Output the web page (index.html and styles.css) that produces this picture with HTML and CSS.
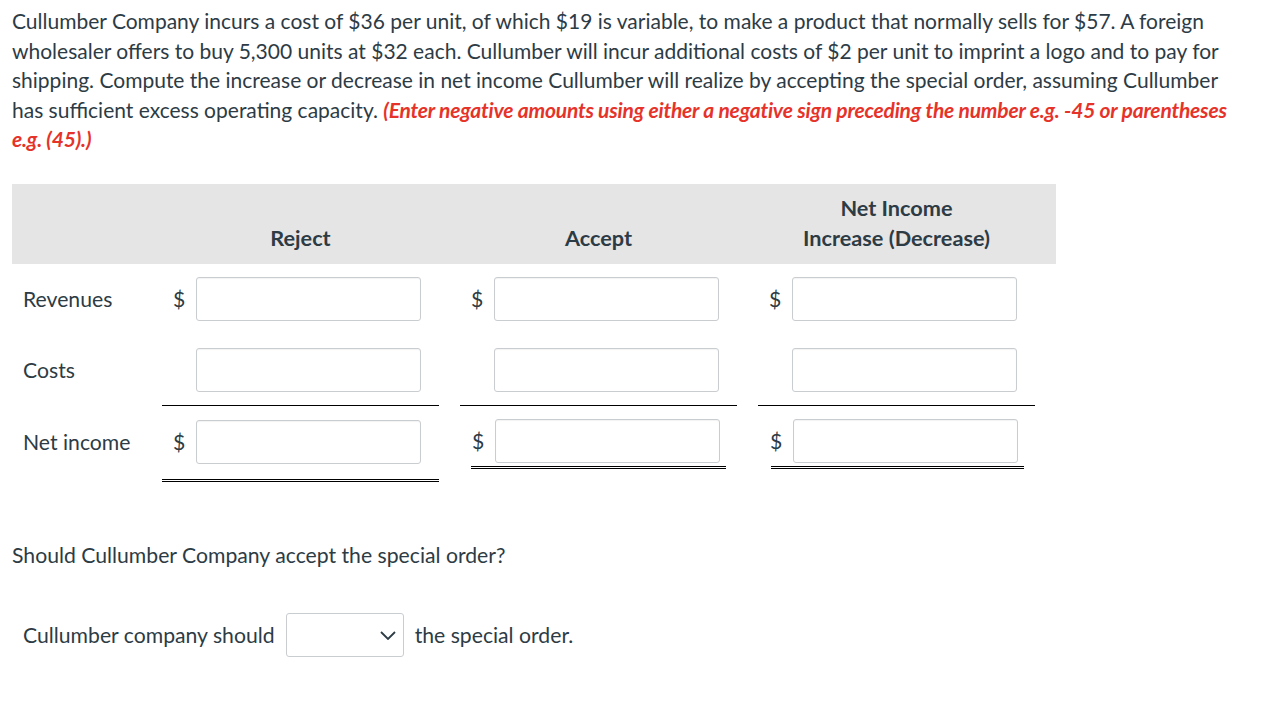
FILE: index.html
```html
<!DOCTYPE html>
<html lang="en">
<head>
<meta charset="utf-8">
<title>Special order</title>
<link rel="stylesheet" href="styles.css">
</head>
<body>
<div class="page">
  <p class="question">Cullumber Company incurs a cost of $36 per unit, of which $19 is variable, to make a product that normally sells for $57. A foreign wholesaler offers to buy 5,300 units at $32 each. Cullumber will incur additional costs of $2 per unit to imprint a logo and to pay for shipping. Compute the increase or decrease in net income Cullumber will realize by accepting the special order, assuming Cullumber has sufficient excess operating capacity. <span class="note">(Enter negative amounts using either a negative sign preceding the number e.g. -45 or parentheses e.g. (45).)</span></p>

  <div class="sheet">
    <div class="row head">
      <div class="hcell"></div>
      <div class="hcell">Reject</div>
      <div class="hcell">Accept</div>
      <div class="hcell">Net Income<br>Increase (Decrease)</div>
    </div>
    <div class="row r1">
      <div class="label">Revenues</div>
      <div class="cell"><span class="cur">$</span><span class="box"></span></div>
      <div class="cell"><span class="cur">$</span><span class="box"></span></div>
      <div class="cell"><span class="cur">$</span><span class="box"></span></div>
    </div>
    <div class="row r2">
      <div class="label">Costs</div>
      <div class="cell under"><span class="cur"></span><span class="box"></span></div>
      <div class="cell under"><span class="cur"></span><span class="box"></span></div>
      <div class="cell under"><span class="cur"></span><span class="box"></span></div>
    </div>
    <div class="row r3">
      <div class="label">Net income</div>
      <div class="cell dbl-full"><span class="cur">$</span><span class="box"></span></div>
      <div class="cellwrap">
        <div class="cell tight"><span class="cur">$</span><span class="box"></span></div>
        <div class="dbl dbl-a"></div>
      </div>
      <div class="cellwrap">
        <div class="cell tight"><span class="cur">$</span><span class="box"></span></div>
        <div class="dbl dbl-n"></div>
      </div>
    </div>
  </div>

  <p class="ask">Should Cullumber Company accept the special order?</p>

  <div class="answer">
    <span>Cullumber company should</span>
    <span class="select">
      <svg class="chev" width="16" height="9" viewBox="0 0 16 9"><path d="M1 1 L8 8 L15 1" fill="none" stroke="#2d3b45" stroke-width="1.8"/></svg>
    </span>
    <span>the special order.</span>
  </div>
</div>
</body>
</html>
```
FILE: styles.css
```css
* { box-sizing: border-box; }
body {
  margin: 0;
  background: #fff;
  color: #2d3b45;
  font-family: Lato, "Open Sans", "Liberation Sans", sans-serif;
  font-size: 21.2px;
}
.page {
  padding: 6px 12px 0 12px;
}
.question {
  margin: 0;
  width: 1232px;
  font-size: 21px;
  line-height: 29.5px;
}
.note {
  color: #e6332a;
  font-weight: 700;
  font-style: italic;
  letter-spacing: -0.2px;
}
.sheet {
  margin-top: 30px;
  width: 1044px;
}
.row {
  display: grid;
  grid-template-columns: 129px 277px 277px 277px;
  column-gap: 21px;
  padding-right: 21px;
}
.head {
  background: #e5e5e5;
  height: 80px;
  align-items: end;
}
.hcell {
  font-weight: 700;
  font-size: 21.7px;
  text-align: center;
  line-height: 30px;
  padding-bottom: 11px;
}
.label {
  padding-left: 11px;
  display: flex;
  align-items: center;
}
.cell {
  display: flex;
  align-items: center;
  padding-left: 11px;
}
.cur {
  width: 23px;
  flex: none;
}
.box {
  display: block;
  width: 225px;
  height: 44px;
  border: 1px solid #c9cdd0;
  border-radius: 3px;
  background: #fff;
  box-shadow: inset 0 1px 1px rgba(0,0,0,0.05);
}
.r1 .cell, .r1 .label { padding-top: 13px; padding-bottom: 14px; }
.r2 .cell, .r2 .label { padding-top: 13px; padding-bottom: 13px; }
.r2 .cell.under { border-bottom: 1px solid #000; }
.r3 .label { padding-top: 14px; padding-bottom: 18px; }
.r3 .cell.dbl-full {
  padding-top: 14px;
  padding-bottom: 15px;
  border-bottom: 3px double #000;
  align-self: start;
}
.cellwrap {
  display: flex;
  flex-direction: column;
  padding-top: 13px;
}
.cell.tight { padding-left: 12px; }
.dbl {
  margin-top: 3px;
  height: 3px;
  border-top: 1px solid #000;
  border-bottom: 1px solid #000;
}
.dbl-a { margin-left: 11px; width: 255px; }
.dbl-n { margin-left: 13px; width: 253px; }
.ask {
  margin: 58px 0 0 0;
  line-height: 30px;
}
.answer {
  margin-top: 43px;
  padding-left: 11px;
  display: flex;
  align-items: center;
  gap: 11px;
}
.select {
  position: relative;
  display: block;
  width: 118px;
  height: 44px;
  border: 1px solid #c9cdd0;
  border-radius: 3px;
  background: #fff;
}
.chev {
  position: absolute;
  right: 7px;
  top: 17px;
}
```
